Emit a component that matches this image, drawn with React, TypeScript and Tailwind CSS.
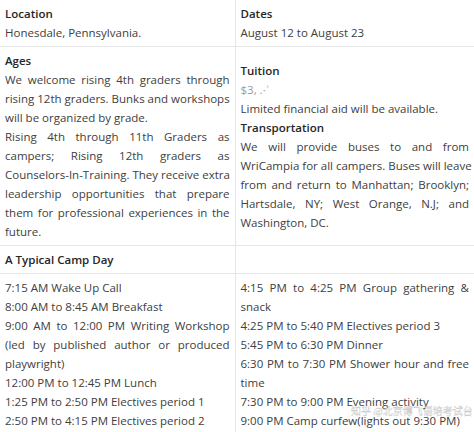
import type { ReactNode } from 'react'

const cell =
  'border border-[#e6e6e6] px-[5px] py-[4px] align-middle first:border-l-0 last:border-r-0'

function Head({ children }: { children: ReactNode }) {
  return <div className="font-semibold text-[#262626]">{children}</div>
}

// a line that is stretched to the full cell width, as in the justified source text
function J({ children }: { children: ReactNode }) {
  return (
    <div className="whitespace-nowrap text-justify [text-align-last:justify]">{children}</div>
  )
}

function L({ children }: { children: ReactNode }) {
  return <div className="whitespace-nowrap">{children}</div>
}

export default function App() {
  return (
    <div className="relative h-[432px] w-[474px] overflow-hidden bg-white font-['Open_Sans',sans-serif] text-[11.5px] leading-[19px] text-[#404040]">
      <table className="w-full table-fixed border-collapse">
        <colgroup>
          <col className="w-[235px]" />
          <col />
        </colgroup>
        <tbody>
          <tr className="[&>td]:border-t-0">
            <td className={cell}>
              <Head>Location</Head>
              <L>Honesdale, Pennsylvania.</L>
            </td>
            <td className={cell}>
              <Head>Dates</Head>
              <L>August 12 to August 23</L>
            </td>
          </tr>
          <tr>
            <td className={cell}>
              <Head>Ages</Head>
              <J>We welcome rising 4th graders through</J>
              <J>rising 12th graders. Bunks and workshops</J>
              <L>will be organized by grade.</L>
              <J>Rising 4th through 11th Graders as</J>
              <J>campers; Rising 12th graders as</J>
              <J>Counselors-In-Training. They receive extra</J>
              <J>leadership opportunities that prepare</J>
              <J>them for professional experiences in the</J>
              <L>future.</L>
            </td>
            <td className={cell}>
              <Head>Tuition</Head>
              <L>
                <span className="text-[#9a9a9a]">$3, .·ʾ</span>
              </L>
              <L>Limited financial aid will be available.</L>
              <Head>Transportation</Head>
              <J>We will provide buses to and from</J>
              <J>WriCampia for all campers. Buses will leave</J>
              <J>from and return to Manhattan; Brooklyn;</J>
              <J>Hartsdale, NY; West Orange, N.J; and</J>
              <L>Washington, DC.</L>
            </td>
          </tr>
          <tr>
            <td className={cell}>
              <Head>A Typical Camp Day</Head>
            </td>
            <td className={cell}></td>
          </tr>
          <tr className="[&>td]:border-b-0">
            <td className={`${cell} align-top`}>
              <L>7:15 AM Wake Up Call</L>
              <L>8:00 AM to 8:45 AM Breakfast</L>
              <J>9:00 AM to 12:00 PM Writing Workshop</J>
              <J>(led by published author or produced</J>
              <L>playwright)</L>
              <L>12:00 PM to 12:45 PM Lunch</L>
              <L>1:25 PM to 2:50 PM Electives period 1</L>
              <L>2:50 PM to 4:15 PM Electives period 2</L>
            </td>
            <td className={`${cell} align-top`}>
              <J>4:15 PM to 4:25 PM Group gathering &amp;</J>
              <L>snack</L>
              <L>4:25 PM to 5:40 PM Electives period 3</L>
              <L>5:45 PM to 6:30 PM Dinner</L>
              <J>6:30 PM to 7:30 PM Shower hour and free</J>
              <L>time</L>
              <L>7:30 PM to 9:00 PM Evening activity</L>
              <L>9:00 PM Camp curfew(lights out 9:30 PM)</L>
            </td>
          </tr>
        </tbody>
      </table>

      {/* faded watermark */}
      <div className="pointer-events-none absolute left-[351px] top-[404px] whitespace-nowrap font-['Noto_Sans_CJK_SC',sans-serif] text-[10px] leading-[13px] text-white/90 [-webkit-text-stroke:0.35px_#c4c4c4]">
        知乎 @北京博飞语培考试台
      </div>
    </div>
  )
}
